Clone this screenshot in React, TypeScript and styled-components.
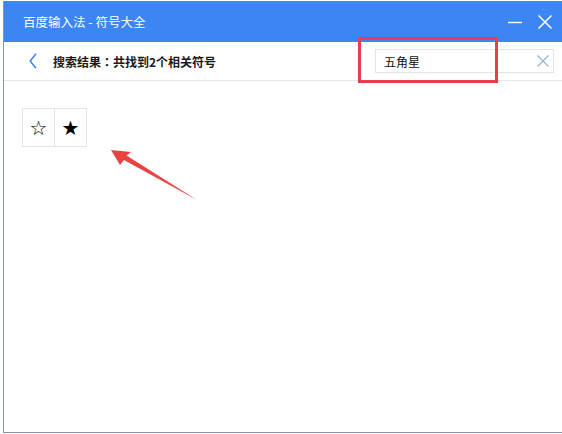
import React from "react";
import styled, { createGlobalStyle } from "styled-components";

const Global = createGlobalStyle`
  html, body { margin: 0; padding: 0; background: #ffffff; }
  body { width: 562px; height: 434px; overflow: hidden; font-family: "Noto Sans CJK SC", "Noto Sans", sans-serif; }
`;

const Frame = styled.div`
  display: flex;
  padding: 1px 0 0 3px;
  height: 434px;
  box-sizing: border-box;
`;

const Window = styled.div`
  position: relative;
  width: 559px;
  height: 432px;
  box-sizing: border-box;
  border-left: 1px solid #8294ae;
  border-bottom: 1px solid #8294ae;
  display: flex;
  flex-direction: column;
  background: #ffffff;
`;

const TitleBar = styled.div`
  height: 41px;
  flex: none;
  background: #3b86f4;
  display: flex;
  align-items: center;
  padding: 0 10px 0 19px;
  color: #ffffff;
  font-size: 12.5px;
`;

const Controls = styled.div`
  margin-left: auto;
  display: flex;
  align-items: center;
  gap: 16px;
`;

const CtrlIcon = styled.svg`
  width: 14px;
  height: 14px;
  display: block;
`;

const SubHeader = styled.div`
  height: 38px;
  flex: none;
  border-bottom: 1px solid #e6e8eb;
  display: flex;
  align-items: center;
  padding: 0 8px 0 25px;
`;

const BackIcon = styled.svg`
  width: 8px;
  height: 16px;
  display: block;
  margin-right: 16px;
`;

const ResultText = styled.span`
  font-size: 12px;
  font-weight: 700;
  color: #1a1a1a;
`;

const Colon = styled.span`
  font-family: "Noto Sans CJK TC", "Noto Sans CJK SC", sans-serif;
`;

const SearchBox = styled.div`
  margin-left: auto;
  width: 179px;
  height: 24px;
  box-sizing: border-box;
  border: 1px solid #e1e5eb;
  display: flex;
  align-items: center;
  padding: 0 4px 0 8px;
  font-size: 12px;
  color: #111111;
`;

const ClearIcon = styled.svg`
  margin-left: auto;
  width: 12px;
  height: 12px;
  display: block;
`;

const Content = styled.div`
  flex: 1;
  padding: 27px 0 0 18px;
`;

const StarGrid = styled.div`
  display: inline-flex;
  border: 1px solid #e4e4e4;
`;

const StarCell = styled.div<{ $last?: boolean }>`
  width: 31px;
  height: 37px;
  display: flex;
  align-items: center;
  justify-content: center;
  border-right: ${(p) => (p.$last ? "none" : "1px solid #e4e4e4")};
  font-family: "DejaVu Sans", sans-serif;
  font-size: 20px;
  color: #000000;
`;

const Highlight = styled.div`
  position: absolute;
  left: 354px;
  top: 36px;
  width: 140px;
  height: 46px;
  box-sizing: border-box;
  border: 3px solid #e5404a;
`;

const Arrow = styled.svg`
  position: absolute;
  left: 96px;
  top: 139px;
  width: 100px;
  height: 65px;
`;

export default function App() {
  return (
    <>
      <Global />
      <Frame>
        <Window>
          <TitleBar>
            <span>百度输入法 - 符号大全</span>
            <Controls>
              <CtrlIcon viewBox="0 0 14 14">
                <line x1="0" y1="7.5" x2="14" y2="7.5" stroke="#ffffff" strokeWidth="1.4" />
              </CtrlIcon>
              <CtrlIcon viewBox="0 0 14 14">
                <path d="M0.5 0.5 L13.5 13.5 M13.5 0.5 L0.5 13.5" stroke="#ffffff" strokeWidth="1.5" fill="none" />
              </CtrlIcon>
            </Controls>
          </TitleBar>
          <SubHeader>
            <BackIcon viewBox="0 0 8 16">
              <path d="M7 0.8 L1.2 8 L7 15.2" stroke="#3b86f4" strokeWidth="1.5" fill="none" />
            </BackIcon>
            <ResultText>
              搜索结果<Colon>：</Colon>共找到2个相关符号
            </ResultText>
            <SearchBox>
              <span>五角星</span>
              <ClearIcon viewBox="0 0 12 12">
                <path d="M0.5 0.5 L11.5 11.5 M11.5 0.5 L0.5 11.5" stroke="#9db3c9" strokeWidth="1.3" fill="none" />
              </ClearIcon>
            </SearchBox>
          </SubHeader>
          <Content>
            <StarGrid>
              <StarCell>☆</StarCell>
              <StarCell $last>★</StarCell>
            </StarGrid>
          </Content>
          <Highlight />
          <Arrow viewBox="0 0 100 65">
            <polygon points="11,10 31,12 26.5,15.5 97,60 24,20 20,25" fill="#ea4141" />
          </Arrow>
        </Window>
      </Frame>
    </>
  );
}
